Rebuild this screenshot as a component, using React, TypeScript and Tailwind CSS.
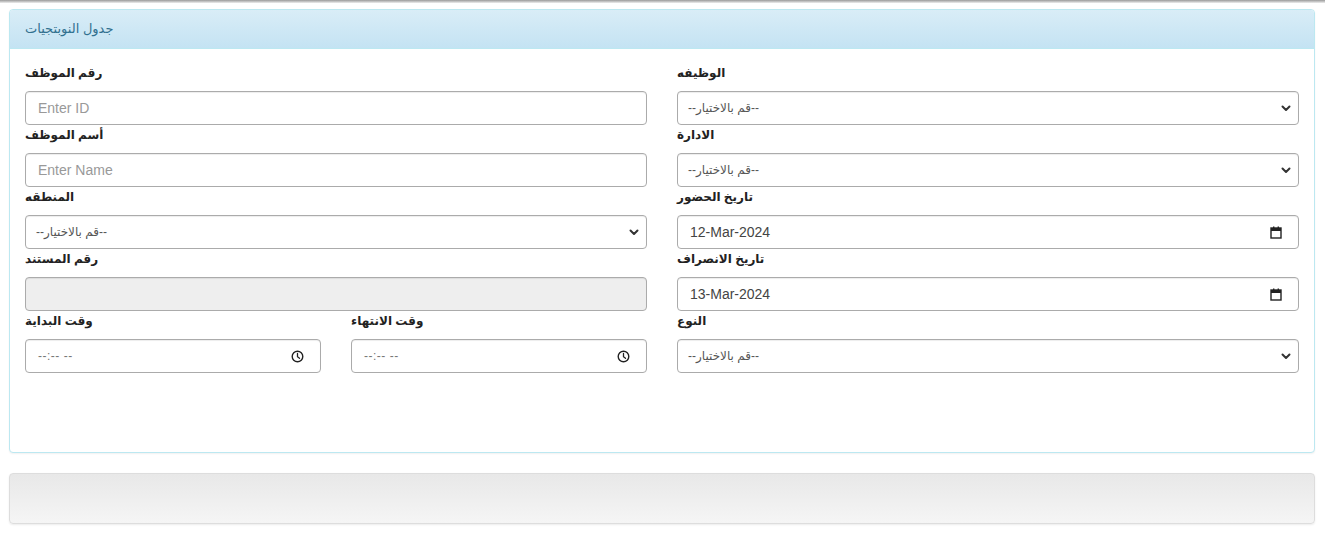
import React from "react";

const Chevron = () => (
  <svg width="10" height="7" viewBox="0 0 10 7" className="text-[#333]">
    <path d="M1.5 1.5L5 5l3.5-3.5" fill="none" stroke="currentColor" strokeWidth="2" strokeLinecap="round" strokeLinejoin="round" />
  </svg>
);

const CalendarIcon = () => (
  <svg width="12" height="13" viewBox="0 0 12 13" className="text-[#222]">
    <rect x="1" y="2" width="10" height="10" fill="none" stroke="currentColor" strokeWidth="1.4" />
    <rect x="1" y="2" width="10" height="3" fill="currentColor" />
    <rect x="3" y="0.5" width="1.4" height="2" fill="currentColor" />
    <rect x="7.6" y="0.5" width="1.4" height="2" fill="currentColor" />
  </svg>
);

const ClockIcon = () => (
  <svg width="13" height="13" viewBox="0 0 13 13" className="text-[#222]">
    <circle cx="6.5" cy="6.5" r="5.3" fill="none" stroke="currentColor" strokeWidth="1.4" />
    <path d="M6.5 3.4v3.3l2 1.6" fill="none" stroke="currentColor" strokeWidth="1.3" strokeLinecap="round" />
  </svg>
);

const Label = ({ children }: { children: React.ReactNode }) => (
  <div className="mb-[8px] h-[20px] text-[12px] font-bold leading-[20px] text-[#222]">{children}</div>
);

// shared look of the form controls (no background, set per control)
const boxCls =
  "flex h-[34px] items-center rounded-[4px] border border-[#ababab] shadow-[inset_0_1px_1px_rgba(0,0,0,0.075)]";

const TextField = ({ placeholder }: { placeholder: string }) => (
  <input
    type="text"
    placeholder={placeholder}
    className={`${boxCls} w-full bg-white px-[12px] text-[14px] text-[#555] outline-none placeholder:text-[#999]`}
  />
);

const SelectField = () => (
  <div className={`${boxCls} justify-between bg-white pl-[10px] pr-[7px]`}>
    <span className="text-[12px] text-[#555]">--قم بالاختيار--</span>
    <Chevron />
  </div>
);

const DateField = ({ value }: { value: string }) => (
  <div className={`${boxCls} justify-between bg-white pl-[12px] pr-[16px]`}>
    <span className="text-[14px] text-[#444]">{value}</span>
    <CalendarIcon />
  </div>
);

const TimeField = () => (
  <div className={`${boxCls} justify-between bg-white pl-[12px] pr-[16px]`}>
    <span dir="ltr" className="text-[12px] tracking-[0.5px] text-[#777]">--:-- --</span>
    <ClockIcon />
  </div>
);

const Group = ({ label, children }: { label: string; children: React.ReactNode }) => (
  <div>
    <Label>{label}</Label>
    {children}
  </div>
);

export default function App() {
  return (
    <div className="min-h-[546px] bg-white font-['Liberation_Sans','DejaVu_Sans',Arial,sans-serif]">
      <div className="h-[3px] bg-gradient-to-b from-[#9a9a9a] to-[#eeeeee]" />

      <div className="mt-[6px] ml-[9px] mr-[10px] rounded-[4px] border border-[#bce8f1] bg-white shadow-[0_1px_2px_rgba(0,0,0,0.06)]">
        <div className="flex h-[39px] items-center rounded-t-[3px] border-b border-[#bce8f1] bg-gradient-to-b from-[#d9edf7] to-[#c4e3f3] px-[15px]">
          <span className="text-[13px] text-[#31708f]">جدول النوبتجيات</span>
        </div>

        <div className="grid grid-cols-2 gap-x-[30px] px-[15px] pt-[14px] pb-[79px]">
          <div className="flex flex-col">
            <Group label="رقم الموظف">
              <TextField placeholder="Enter ID" />
            </Group>
            <Group label="أسم الموظف">
              <TextField placeholder="Enter Name" />
            </Group>
            <Group label="المنطقه">
              <SelectField />
            </Group>
            <Group label="رقم المستند">
              <div className={`${boxCls} bg-[#eeeeee]`} />
            </Group>
            <div className="grid grid-cols-2 gap-x-[30px]">
              <Group label="وقت البداية">
                <TimeField />
              </Group>
              <Group label="وقت الانتهاء">
                <TimeField />
              </Group>
            </div>
          </div>

          <div className="flex flex-col">
            <Group label="الوظيفه">
              <SelectField />
            </Group>
            <Group label="الادارة">
              <SelectField />
            </Group>
            <Group label="تاريخ الحضور">
              <DateField value="12-Mar-2024" />
            </Group>
            <Group label="تاريخ الانصراف">
              <DateField value="13-Mar-2024" />
            </Group>
            <Group label="النوع">
              <SelectField />
            </Group>
          </div>
        </div>
      </div>

      <div className="mt-[20px] ml-[9px] mr-[10px] h-[51px] rounded-[4px] border border-[#dddddd] bg-gradient-to-b from-[#e8e8e8] to-[#f5f5f5] shadow-[0_1px_2px_rgba(0,0,0,0.08)]" />
    </div>
  );
}
